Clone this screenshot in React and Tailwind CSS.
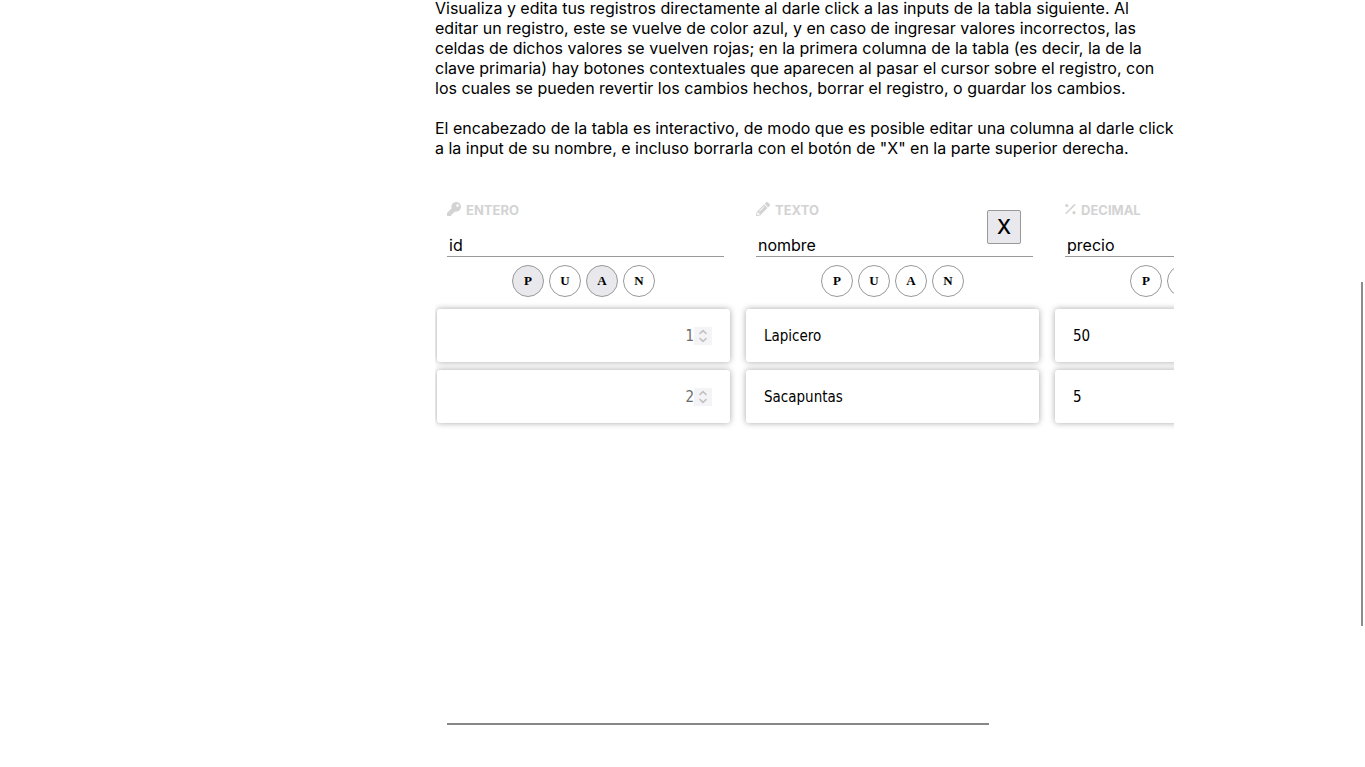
import React from "react";
import { FaKey, FaPencilAlt } from "react-icons/fa";

function PercentIcon() {
  return (
    <svg viewBox="0 0 11 14" className="h-[14px] w-[11px]" fill="currentColor" aria-hidden="true">
      <circle cx="1.8" cy="3.5" r="1.6" />
      <circle cx="9" cy="10.7" r="1.6" />
      <path d="M9.6 2.9 L1.2 11.3" stroke="currentColor" strokeWidth="1.6" strokeLinecap="round" />
    </svg>
  );
}

const columns = [
  { name: "id", type: "ENTERO", icon: <FaKey className="size-[14px]" />, active: ["P", "A"] },
  { name: "nombre", type: "TEXTO", icon: <FaPencilAlt className="size-[14px]" />, active: [], removable: true },
  { name: "precio", type: "DECIMAL", icon: <PercentIcon />, active: [] },
];

const rows = [
  { id: 1, nombre: "Lapicero", precio: "50" },
  { id: 2, nombre: "Sacapuntas", precio: "5" },
];

const flags = [
  ["P", "Clave primaria"],
  ["U", "Único"],
  ["A", "Autoincremental"],
  ["N", "No nulo"],
];

function ColumnHeader({ column }) {
  return (
    <th scope="col" className="relative w-[309px] pt-5 pr-5 pb-2 pl-3 text-left align-top font-normal">
      <label
        htmlFor={`columna-${column.name}`}
        className="flex h-5 items-center gap-[5px] text-[13px] leading-5 font-bold text-[#d3d3d3]"
      >
        <span className="flex h-4 shrink-0 items-start">{column.icon}</span>
        {column.type}
      </label>
      <input
        id={`columna-${column.name}`}
        defaultValue={column.name}
        className="mt-[14px] block h-[23px] w-full border-b border-[#999999] bg-transparent px-0.5 text-base leading-5 text-black outline-none"
      />
      <div className="mt-2 flex justify-center gap-[5px] pr-1">
        {flags.map(([flag, title]) => (
          <button
            key={flag}
            type="button"
            aria-label={`${title} (${flag})`}
            className={
              "size-8 rounded-full border border-[#999999] font-['Liberation_Serif',serif] text-[13px] font-bold text-black " +
              (column.active.includes(flag) ? "bg-[#e9e9ed]" : "bg-white")
            }
          >
            {flag}
          </button>
        ))}
      </div>
      {column.removable && (
        <button
          type="button"
          aria-label={`X: borrar columna ${column.name}`}
          className="absolute top-[30px] right-8 size-[34px] rounded-xs border border-[#999999] bg-[#e9e9ed] text-xl leading-8 font-medium text-black"
        >
          X
        </button>
      )}
    </th>
  );
}

function Cell({ label, children }) {
  return (
    <td className="pt-1 pr-[14px] pb-1 pl-0.5">
      <label className="flex h-[53px] items-center rounded-[3px] bg-white px-[18px] pt-px font-['DejaVu_Sans_Condensed','DejaVu_Sans',sans-serif] text-[15px] text-black shadow-[0_0_6px_rgba(0,0,0,0.35)]">
        <span className="sr-only">{label}</span>
        {children}
      </label>
    </td>
  );
}

function Stepper() {
  return (
    <span className="flex size-[18px] shrink-0 items-center justify-center bg-[#f4f4f6] text-[#c2c2c6]">
      <svg viewBox="0 0 18 18" className="size-[18px]" fill="none" stroke="currentColor" strokeWidth="1.6" aria-hidden="true">
        <path d="M5.5 6.8 L9 3.6 L12.5 6.8 M5.5 11.2 L9 14.4 L12.5 11.2" />
      </svg>
    </span>
  );
}

export default function App() {
  return (
    <div className="relative h-screen overflow-hidden bg-white pl-[244px] font-['Inter',sans-serif] text-base text-black">
      <main className="mx-auto flex h-full max-w-[739px] flex-col">
        <div className="-mt-0.5 flex flex-col gap-5 leading-5">
          <p>
            Visualiza y edita tus registros directamente al darle click a las inputs de la tabla siguiente. Al editar un
            registro, este se vuelve de color azul, y en caso de ingresar valores incorrectos, las celdas de dichos
            valores se vuelven rojas; en la primera columna de la tabla (es decir, la de la clave primaria) hay botones
            contextuales que aparecen al pasar el cursor sobre el registro, con los cuales se pueden revertir los
            cambios hechos, borrar el registro, o guardar los cambios.
          </p>
          <p>
            El encabezado de la tabla es interactivo, de modo que es posible editar una columna al darle click a la
            input de su nombre, e incluso borrarla con el botón de "X" en la parte superior derecha.
          </p>
        </div>

        <section aria-label="Registros" className="mt-[22px] flex h-[545px] flex-col justify-between overflow-hidden">
          <table className="w-[927px] table-fixed border-collapse">
            <thead>
              <tr>
                {columns.map((column) => (
                  <ColumnHeader key={column.name} column={column} />
                ))}
              </tr>
            </thead>
            <tbody>
              {rows.map((row) => (
                <tr key={row.id}>
                  <Cell label="id">
                    <input
                      readOnly
                      inputMode="numeric"
                      defaultValue={row.id}
                      className="min-w-0 flex-1 bg-transparent text-right text-[#6d6d6d] outline-none"
                    />
                    <Stepper />
                  </Cell>
                  <Cell label="nombre">
                    <input defaultValue={row.nombre} className="min-w-0 flex-1 bg-transparent outline-none" />
                  </Cell>
                  <Cell label="precio">
                    <input
                      inputMode="decimal"
                      defaultValue={row.precio}
                      className="min-w-0 flex-1 bg-transparent outline-none"
                    />
                  </Cell>
                </tr>
              ))}
            </tbody>
          </table>
          <div className="px-3">
            <div className="h-0.5 w-[542px] bg-[#88888a]" />
          </div>
        </section>
      </main>
      <div className="absolute top-[282px] right-0.5 h-[344px] w-0.5 bg-[#8c8c8c]" />
    </div>
  );
}
